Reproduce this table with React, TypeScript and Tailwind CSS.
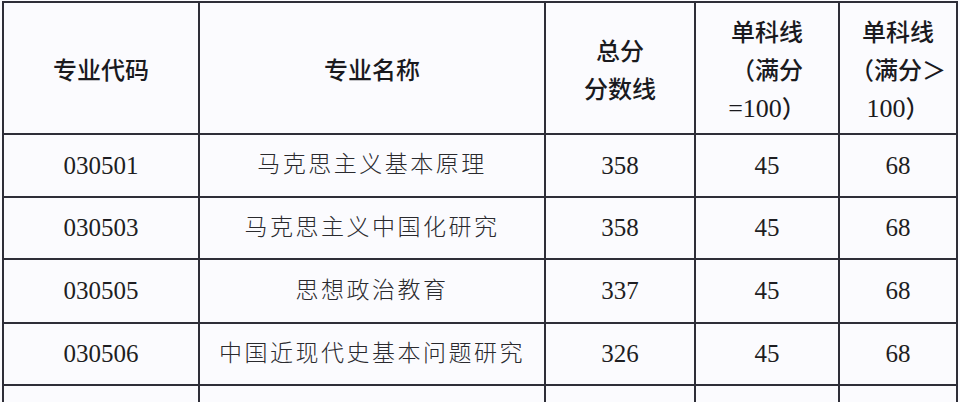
import React from 'react';

type Row = { code: string; name: string; total: string; single: string; singleHigh: string };

const rows: Row[] = [
  { code: '030501', name: '马克思主义基本原理', total: '358', single: '45', singleHigh: '68' },
  { code: '030503', name: '马克思主义中国化研究', total: '358', single: '45', singleHigh: '68' },
  { code: '030505', name: '思想政治教育', total: '337', single: '45', singleHigh: '68' },
  { code: '030506', name: '中国近现代史基本问题研究', total: '326', single: '45', singleHigh: '68' },
  { code: '', name: '', total: '', single: '', singleHigh: '' },
];

const Head: React.FC<{ lines: React.ReactNode[] }> = ({ lines }) => (
  <div className="bg-[#fbfbfe] flex flex-col items-center justify-center pt-[5px] text-[24px] leading-[38px] font-medium text-[#1a1a1e] font-['Liberation_Serif','Noto_Sans_CJK_SC',sans-serif]">
    {lines.map((l, i) => (
      <span key={i}>{l}</span>
    ))}
  </div>
);

const Num: React.FC<{ children: React.ReactNode }> = ({ children }) => (
  <span className="text-[26px] font-normal">{children}</span>
);

const Cell: React.FC<{ children?: React.ReactNode; cjk?: boolean }> = ({ children, cjk }) => (
  <div
    className={
      cjk
        ? 'bg-[#fbfbfe] flex items-center justify-center text-[23px] tracking-[2.5px] font-light text-[#2a2a2e]'
        : 'bg-[#fbfbfe] flex items-center justify-center text-[25px] text-[#1e1e22]'
    }
  >
    {children}
  </div>
);

export default function App() {
  return (
    <div className="w-[960px] h-[402px] overflow-hidden bg-[#fbfbfe] pl-[2px] pt-[1px]">
      <div className="grid grid-cols-[194px_344px_148px_142px_116px] grid-rows-[130px_61px_60px_62px_60px_60px] gap-[2px] p-[2px] bg-[#2e2e38] w-fit font-['Liberation_Serif','Noto_Sans_CJK_SC',serif]">
        <Head lines={['专业代码']} />
        <Head lines={['专业名称']} />
        <Head lines={['总分', '分数线']} />
        <Head lines={['单科线', '（满分', <><Num>=100</Num>）</>]} />
        <Head lines={['单科线', '（满分＞', <><Num>100</Num>）</>]} />
        {rows.map((r, i) => (
          <React.Fragment key={i}>
            <Cell>{r.code}</Cell>
            <Cell cjk>{r.name}</Cell>
            <Cell>{r.total}</Cell>
            <Cell>{r.single}</Cell>
            <Cell>{r.singleHigh}</Cell>
          </React.Fragment>
        ))}
      </div>
    </div>
  );
}
